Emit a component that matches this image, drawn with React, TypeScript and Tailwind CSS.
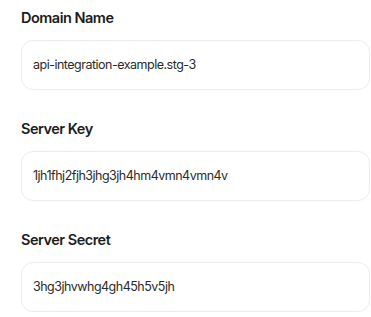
const fields = [
  { label: "Domain Name", value: "api-integration-example.stg-3" },
  { label: "Server Key", value: "1jh1fhj2fjh3jhg3jh4hm4vmn4vmn4v" },
  { label: "Server Secret", value: "3hg3jhvwhg4gh45h5v5jh" },
];

export default function App() {
  return (
    <div className="min-h-screen bg-white pl-[21px] pr-[1px] pt-[6px] font-['Inter',sans-serif]">
      <div className="flex flex-col gap-[27px]">
        {fields.map((f) => (
          <div key={f.label} className="flex flex-col">
            <label className="text-[14.5px] leading-6 font-semibold text-[#1c1c1c] tracking-[-0.5px]">
              {f.label}
            </label>
            <div className="mt-[10px] h-[50px] flex items-center rounded-[12px] border border-[#ededed] pl-[11px] text-[12.5px] text-[#2a2a2a] tracking-[-0.5px]">
              {f.value}
            </div>
          </div>
        ))}
      </div>
    </div>
  );
}
